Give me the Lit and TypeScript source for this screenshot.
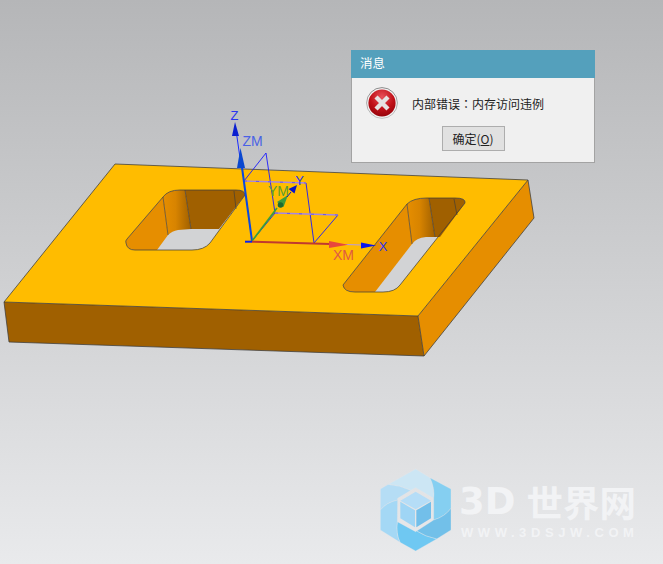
import { LitElement, html, css, svg } from "lit";
import { customElement } from "lit/decorators.js";

const EDGE = "#3c3c3c";

const plate = svg`
  <polygon points="4,302 418,316 424,356 9,342" fill="#a06000"/>
  <polygon points="418,316 528,180 534,218 424,356" fill="#e68e00"/>
  <polygon points="115,164 528,180 418,316 4,302" fill="#ffbc00"/>
  <path d="M4,302 L115,164 L528,180 L534,218 L424,356 L9,342 Z M4,302 L418,316 L528,180 M418,316 L424,356" fill="none" stroke="${EDGE}" stroke-width="0.9" stroke-opacity="0.85" stroke-linejoin="round"/>

  <!-- first pocket -->
  <path d="M126,243 Q125,241 127,239 L163,197 Q168,190 180,190 L236,190 Q245,190 245,195 L210,243 Q204,250 192,250 L135,250 Q127,250 126,243 Z" fill="#d2d3d5"/>
  <path d="M126,243 Q125,241 127,239 L163,197 L168,235 L157,250 L135,250 Q127,250 126,243 Z" fill="#e68e00"/>
  <path d="M163,197 Q168,190 180,190 L185,190 L191,229 L178,230 Q172,231 168,235 Z" fill="url(#wall)"/>
  <path d="M185,190 L236,190 Q245,190 245,195 L219,229 L191,229 Z" fill="#a06000"/>
  <path d="M163,197 L168,235 M185,190 L191,229 M234,191 L236,209" fill="none" stroke="${EDGE}" stroke-width="0.8" stroke-opacity="0.8"/>
  <path d="M126,243 Q125,241 127,239 L163,197 Q168,190 180,190 L236,190 Q245,190 245,195 L210,243 Q204,250 192,250 L135,250 Q127,250 126,243 Z" fill="none" stroke="${EDGE}" stroke-width="0.9" stroke-opacity="0.8"/>

  <!-- second pocket -->
  <path d="M343,285 L407,204 Q413,198 427,198 L455,198 Q466,198 465,203 L400,285 Q395,292 383,292 L355,292 Q344,292 343,285 Z" fill="#d2d3d5"/>
  <path d="M343,285 L407,204 L412,244 L375,292 L355,292 Q344,292 343,285 Z" fill="#e68e00"/>
  <path d="M407,204 Q413,198 427,198 L429,198 L435,237 L426,237 Q416,238 412,244 Z" fill="url(#wall)"/>
  <path d="M429,198 L455,198 Q466,198 465,203 L440,237 L435,237 Z" fill="#a06000"/>
  <path d="M407,204 L412,244 M429,198 L435,237 M454,199 L457,215" fill="none" stroke="${EDGE}" stroke-width="0.8" stroke-opacity="0.8"/>
  <path d="M343,285 L407,204 Q413,198 427,198 L455,198 Q466,198 465,203 L400,285 Q395,292 383,292 L355,292 Q344,292 343,285 Z" fill="none" stroke="${EDGE}" stroke-width="0.9" stroke-opacity="0.8"/>
`;

const gizmo = svg`
  <!-- datum planes -->
  <path d="M244,181 L266,153 L275,213 L252,241" fill="none" stroke="#1a1aff" stroke-width="0.9"/>
  <path d="M306,183 L314,243 L338,215" fill="none" stroke="#1a1aff" stroke-width="0.9"/>
  <path d="M244,181 L306,183 M275,213 L338,215" fill="none" stroke="#a585e6" stroke-width="1.4"/>
  <path d="M244,181 L306,183 M275,213 L338,215" fill="none" stroke="#2a2af0" stroke-width="0.5" stroke-dasharray="3 9"/>

  <!-- Z axis -->
  <line x1="236" y1="130" x2="241" y2="165" stroke="#1a2cff" stroke-width="1"/>
  <line x1="241" y1="160" x2="252" y2="241" stroke="#0a48e0" stroke-width="2"/>
  <polygon points="235,122 239,136 232,136" fill="#0a1fd0"/>
  <polygon points="240.5,148 245,168 237,168" fill="#0a48d0"/>
  <line x1="245" y1="241.7" x2="252" y2="241.7" stroke="#0a20f0" stroke-width="2"/>

  <!-- Y axis -->
  <line x1="252" y1="241" x2="277" y2="208" stroke="#37a03c" stroke-width="1.6"/>
  <polygon points="288,195 283.5,207 277,202" fill="#3e9c3c"/>
  <circle cx="280.5" cy="205" r="2.8" fill="#1f6a30"/>
  <polygon points="297,185 294.5,193.5 288.5,189" fill="#0a14c8"/>
  <line x1="287" y1="197" x2="291" y2="192" stroke="#0a14c8" stroke-width="1"/>

  <!-- X axis -->
  <line x1="252" y1="241.7" x2="330" y2="244" stroke="#c0392f" stroke-width="2"/>
  <line x1="345" y1="244.5" x2="362" y2="245" stroke="#b79ae0" stroke-width="1.2"/>
  <polygon points="348,244.7 329,241 329,248" fill="#e8463c"/>
  <polygon points="376,245.5 361,242.5 361,248.5" fill="#0a14f0"/>

  <text class="end" x="234.5" y="119.5" fill="#2a35f0" text-anchor="middle">Z</text>
  <text class="tag" x="252.5" y="146" fill="#4a62e6" text-anchor="middle">ZM</text>
  <text class="tag" x="278.5" y="196" fill="#5b9e2e" text-anchor="middle">YM</text>
  <text class="end" x="299.5" y="185" fill="#2a35f0" text-anchor="middle">Y</text>
  <text class="tag" x="343.5" y="260" fill="#df5a44" text-anchor="middle">XM</text>
  <text class="end" x="383" y="251" fill="#2a35f0" text-anchor="middle">X</text>
`;

@customElement("app-root")
export class AppRoot extends LitElement {
  static styles = css`
    :host {
      display: block;
      width: 663px;
      height: 564px;
      overflow: hidden;
    }
    .viewport {
      position: relative;
      width: 663px;
      height: 564px;
      background: linear-gradient(180deg, #b5b6b8 0%, #e9eaec 100%);
      font-family: "Noto Sans CJK SC", "Liberation Sans", sans-serif;
    }
    .scene {
      display: block;
    }
    .end {
      font-family: "Liberation Sans", sans-serif;
      font-size: 13px;
    }
    .tag {
      font-family: "Liberation Sans", sans-serif;
      font-size: 14px;
    }
    .dialog {
      position: absolute;
      left: 351px;
      top: 50px;
      width: 244px;
      height: 113px;
      box-sizing: border-box;
      display: flex;
      flex-direction: column;
      background: #f0f0f0;
      border: 1px solid #a3a3a3;
      border-top: none;
    }
    .title {
      height: 28px;
      box-sizing: border-box;
      margin: 0 -1px;
      padding: 0 0 3px 9px;
      display: flex;
      align-items: center;
      background: #54a0bc;
      color: #fff;
      font-size: 12.5px;
    }
    .message {
      display: flex;
      align-items: center;
      gap: 14px;
      padding: 7px 0 0 14px;
      height: 36px;
      color: #222;
      font-size: 12px;
    }
    .colon {
      font-family: "Noto Sans CJK TC", sans-serif;
    }
    .actions {
      display: flex;
      justify-content: center;
      padding-top: 5px;
    }
    .btn {
      box-sizing: border-box;
      width: 63px;
      height: 25px;
      padding: 0;
      border: 1px solid #adadad;
      background: #e1e1e1;
      color: #222;
      font: inherit;
      font-size: 12px;
    }
    .btn u {
      text-underline-offset: 1px;
    }
    .watermark {
      position: absolute;
      left: 375px;
      top: 465px;
      display: flex;
      align-items: flex-start;
    }
    .brand {
      margin-left: 2px;
      padding-top: 18px;
      display: flex;
      flex-direction: column;
      color: #f2f3f5;
    }
    .brand-name {
      display: flex;
      align-items: center;
      height: 38px;
      font-weight: 700;
      line-height: 38px;
    }
    .latin {
      font-family: "DejaVu Sans", sans-serif;
      font-size: 37px;
    }
    .han {
      margin-left: 11px;
      font-family: "Noto Sans CJK SC", sans-serif;
      font-size: 36.5px;
    }
    .url {
      margin: 5px 0 0 2px;
      font-family: "Liberation Sans", sans-serif;
      font-weight: 700;
      font-size: 13px;
      line-height: 14px;
      letter-spacing: 4.6px;
      white-space: nowrap;
    }
  `;

  private renderErrorIcon() {
    return html`<svg width="32" height="32" viewBox="0 0 32 32">
      <defs>
        <radialGradient id="red" cx="50%" cy="28%" r="78%">
          <stop offset="0" stop-color="#e8505a"/>
          <stop offset="0.55" stop-color="#c01018"/>
          <stop offset="1" stop-color="#8e0008"/>
        </radialGradient>
        <linearGradient id="ring" x1="0" y1="0" x2="0" y2="1">
          <stop offset="0" stop-color="#8a8a8a"/>
          <stop offset="1" stop-color="#c4c4c4"/>
        </linearGradient>
      </defs>
      <circle cx="16" cy="16" r="15.4" fill="#f2f2f2" stroke="url(#ring)" stroke-width="1"/>
      <circle cx="16" cy="16" r="13.6" fill="url(#red)"/>
      <path d="M10,10 L22,22 M22,10 L10,22" stroke="#e6e2e2" stroke-width="4.4"/>
    </svg>`;
  }

  private renderLogo() {
    return html`<svg width="82" height="90" viewBox="0 0 246 270">
      <g stroke="#e6e7e9" stroke-width="1">
        <path d="M16,72 L40,58 Q75,60 108,76 L68,100 L68,105 Q35,112 16,135 Z" fill="#b5ddf5"/>
        <path d="M40,58 L122,12 L165,38 Q180,70 176,100 L122,68 L108,76 Q75,60 40,58 Z" fill="#cce6f4"/>
        <path d="M165,38 L228,72 L228,130 Q210,155 176,165 L176,100 Q180,70 165,38 Z" fill="#85cff1"/>
        <path d="M228,130 L228,195 L185,222 Q150,215 125,198 L176,165 Q210,155 228,130 Z" fill="#72c0e9"/>
        <path d="M185,222 L122,258 L75,232 Q62,205 67,170 L122,200 L125,198 Q150,215 185,222 Z" fill="#6fc8f2"/>
        <path d="M16,135 Q35,112 68,105 L67,170 Q62,205 75,232 L16,195 Z" fill="#a4d8f5"/>
      </g>
      <polygon points="122,80 168,107 122,133 76,107" fill="#b5ddf7"/>
      <polygon points="76,110 120,136 120,187 76,160" fill="#9fd5f5"/>
      <polygon points="168,110 124,136 124,187 168,160" fill="#72bfea"/>
    </svg>`;
  }

  render() {
    return html`<div class="viewport">
      <svg class="scene" width="663" height="564" viewBox="0 0 663 564">
        <defs>
          <linearGradient id="wall" x1="0" y1="0" x2="1" y2="0">
            <stop offset="0" stop-color="#e68e00"/>
            <stop offset="0.45" stop-color="#d88400"/>
            <stop offset="1" stop-color="#a06000"/>
          </linearGradient>
        </defs>
        ${plate}
        ${gizmo}
      </svg>

      <div class="dialog">
        <div class="title">消息</div>
        <div class="message">
          ${this.renderErrorIcon()}
          <span>内部错误<span class="colon">：</span>内存访问违例</span>
        </div>
        <div class="actions">
          <button class="btn">确定(<u>O</u>)</button>
        </div>
      </div>

      <div class="watermark">
        ${this.renderLogo()}
        <div class="brand">
          <div class="brand-name"><span class="latin">3D</span><span class="han">世界网</span></div>
          <div class="url">WWW.3DSJW.COM</div>
        </div>
      </div>
    </div>`;
  }
}
